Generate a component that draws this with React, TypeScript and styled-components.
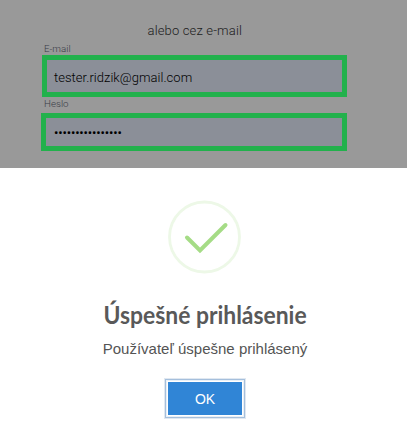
import React from "react";
import styled, { createGlobalStyle } from "styled-components";

const GlobalStyle = createGlobalStyle`
  * { box-sizing: border-box; }
  body { margin: 0; background: #fff; overflow: hidden; }
`;

const Page = styled.main`
  width: 407px;
  height: 425px;
  display: flex;
  flex-direction: column;
  background: #fff;
`;

const LoginForm = styled.section`
  height: 168px;
  padding: 22px 60px 0 41px;
  display: flex;
  flex-direction: column;
  background: #999;
  font-family: Roboto, sans-serif;
`;

const Divider = styled.p`
  margin: 0 0 3px 106.5px;
  font-size: 13px;
  font-weight: 300;
  line-height: 17px;
  letter-spacing: 0.16px;
  color: #1c1c1c;
`;

const Label = styled.label<{ $height: number }>`
  height: ${(p) => p.$height}px;
  padding-left: 3px;
  font-size: 9.75px;
  font-weight: 300;
  line-height: 14px;
  color: #3a3d48;
`;

const Field = styled.div<{ $height: number; $inset?: number }>`
  height: ${(p) => p.$height}px;
  margin-left: ${(p) => p.$inset ?? 0}px;
  padding: 2px 0 0 ${(p) => 8 - (p.$inset ?? 0)}px;
  flex: none;
  display: flex;
  align-items: center;
  border: 5px solid #22b14c;
  background: #8b8f98;
  font-size: 13px;
  font-weight: 300;
  letter-spacing: 0.04px;
  color: #000;
`;

const Dots = styled.span`
  padding-bottom: 2px;
  font-weight: 400;
  letter-spacing: -0.16px;
`;

const Dialog = styled.section`
  flex: 1;
  display: flex;
  flex-direction: column;
  align-items: center;
  padding: 32px 0 0 3px;
  font-family: "Liberation Sans", Arial, sans-serif;
`;

const Title = styled.h2`
  margin: 24px 0 0;
  height: 33px;
  font-family: Lato, sans-serif;
  font-size: 25px;
  font-weight: 700;
  line-height: 33px;
  white-space: nowrap;
  color: #595959;
  transform: scaleX(0.915);
`;

const Message = styled.p`
  margin: 9px 0 0;
  font-size: 15px;
  line-height: 18px;
  color: #545454;
`;

const OkButton = styled.button`
  width: 74px;
  height: 33px;
  margin-top: 24px;
  padding: 0;
  border: 0;
  background: #3085d6;
  box-shadow: 0 0 0 1px #fff, 0 0 0 2px #e9f0f7, 0 0 0 3px #a5bfdc, 0 0 0 4px #e0e8f1;
  color: #fff;
  font: 14px "Liberation Sans", Arial, sans-serif;
`;

const SuccessIcon = () => (
  <svg width="74" height="74" viewBox="0 0 74 74" fill="none">
    <circle cx="36.5" cy="37" r="35" stroke="#edf8e7" strokeWidth="2.8" />
    <path d="M19 37.5L32 50.5L57.5 25" stroke="#a5dc86" strokeWidth="4" strokeLinecap="round" />
  </svg>
);

export default function App() {
  return (
    <Page>
      <GlobalStyle />
      <LoginForm>
        <Divider>alebo cez e-mail</Divider>
        <Label $height={13}>E-mail</Label>
        <Field $height={42} $inset={1}>tester.ridzik@gmail.com</Field>
        <Label $height={16}>Heslo</Label>
        <Field $height={38}>
          <Dots>{"•".repeat(16)}</Dots>
        </Field>
      </LoginForm>
      <Dialog>
        <SuccessIcon />
        <Title>Úspešné prihlásenie</Title>
        <Message>Používateľ úspešne prihlásený</Message>
        <OkButton>OK</OkButton>
      </Dialog>
    </Page>
  );
}
